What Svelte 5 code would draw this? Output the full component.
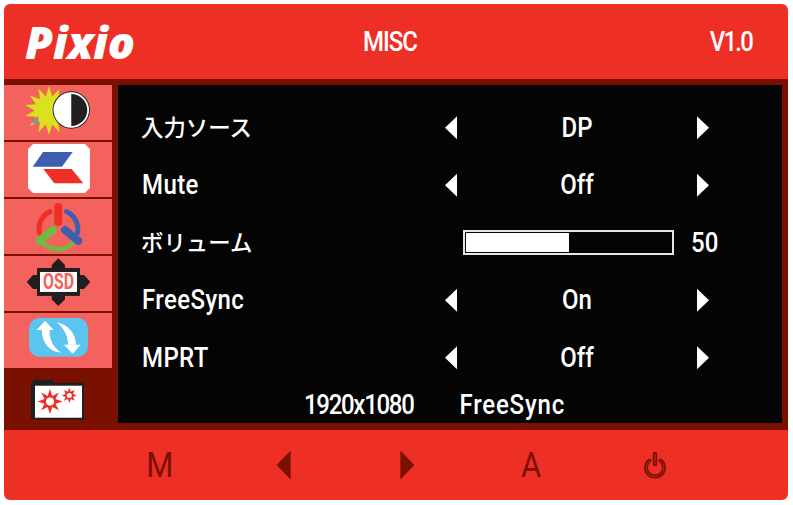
<script>
    let rows = [
        { label: '入力ソース', value: 'DP', cjk: true },
        { label: 'Mute', value: 'Off' },
        { label: 'ボリューム', volume: 50, cjk: true },
        { label: 'FreeSync', value: 'On' },
        { label: 'MPRT', value: 'Off' }
    ];

    // spiky gear / sun outline
    function star(cx, cy, outer, inner, n) {
        let pts = [];
        for (let i = 0; i < n * 2; i++) {
            let r = i % 2 ? inner : outer;
            let a = (Math.PI * i) / n - Math.PI / 2;
            pts.push((cx + r * Math.cos(a)).toFixed(1) + ',' + (cy + r * Math.sin(a)).toFixed(1));
        }
        return pts.join(' ');
    }
</script>

<div class="osd">
    <header class="top">
        <span class="logo">Pixio</span>
        <span class="title tall">MISC</span>
        <span class="version tall">V1.0</span>
    </header>

    <div class="middle">
        <nav class="tabs">
            <div class="tab">
                <svg viewBox="4 85 108 55">
                    <polygon points={star(49, 110.5, 24.5, 14.5, 14)} fill="#dbe01f" />
                    <polygon points="30,123 38,116 39,124" fill="#8f8f8f" />
                    <circle cx="71.3" cy="110" r="18.7" fill="#231f20" />
                    <circle cx="71.3" cy="110" r="17.8" fill="#fff" />
                    <path d="M71.3 94 A16 16 0 0 1 71.3 126 Z" fill="#231f20" />
                </svg>
            </div>
            <div class="tab">
                <svg viewBox="4 142 108 55">
                    <polygon points="33,144 85,144 90,149 90,188 85,193 33,193 28,188 28,149" fill="#fff" />
                    <polygon points="43,152 72.7,152 62,166.7 32.7,166.7" fill="#3e5fb0" />
                    <polygon points="43.3,169 71.7,169 83.3,183.3 54.3,183.3" fill="#ee2f25" />
                </svg>
            </div>
            <div class="tab">
                <svg viewBox="4 199 108 55" fill="none" stroke-linecap="round">
                    <path d="M39.4 233 A19.5 19.5 0 0 1 50 211.5" stroke="#ee2f25" stroke-width="5" />
                    <path d="M66.5 211.5 A19.5 19.5 0 0 1 77.5 233" stroke="#3e5fb0" stroke-width="5" />
                    <path d="M43 243 A21 21 0 0 0 72.5 243.5" stroke="#6fba44" stroke-width="4.5" />
                    <path d="M58.3 207 V222" stroke="#ee2f25" stroke-width="8" />
                    <path d="M52.7 230 L39.5 241" stroke="#6fba44" stroke-width="8" />
                    <path d="M65 230 L78.3 241" stroke="#3e5fb0" stroke-width="8" />
                </svg>
            </div>
            <div class="tab">
                <svg viewBox="4 256 108 55">
                    <g fill="#231f20">
                        <polygon points="58.3,258.3 65,265 65,270 51.7,270 51.7,265" />
                        <polygon points="58.3,306 65,299.5 65,294 51.7,294 51.7,299.5" />
                        <polygon points="26.7,282 33,275 39,275 39,289 33,289" />
                        <polygon points="90.5,282 84,275 78,275 78,289 84,289" />
                        <rect x="37" y="268" width="43" height="28" />
                    </g>
                    <rect x="40" y="272" width="37" height="20" fill="#fff" />
                    <text class="osd-text" x="58.5" y="289" text-anchor="middle" textLength="31" lengthAdjust="spacingAndGlyphs">OSD</text>
                </svg>
            </div>
            <div class="tab">
                <svg viewBox="4 314 108 55">
                    <rect x="29" y="319" width="59" height="38.7" rx="10" fill="#5cc4f0" />
                    <g fill="#fff">
                        <polygon points="45,321.7 53.5,331 36.7,331" />
                        <path d="M41.7 331 C42 345 50 353 61 353.5 C54 349 49.5 342 49.5 331 Z" />
                        <polygon points="72.7,355 80.5,345.7 64,345.7" />
                        <path d="M56.7 323.5 C66 325 76 333 76 345.7 L68 345.7 C68 336 63 328 56.7 323.5 Z" />
                    </g>
                </svg>
            </div>
            <div class="tab active">
                <svg viewBox="4 369 108 55">
                    <path d="M31 379 H33 V376.5 L34 376 H53 L54 379 H84 V416 H31 Z" fill="#231f20" />
                    <rect x="35" y="382" width="47" height="32" fill="#fff" />
                    <polygon points={star(50, 397.7, 12.5, 6, 8)} fill="#ee2f25" />
                    <circle cx="50" cy="397.7" r="4" fill="#fff" />
                    <polygon points={star(69.3, 391.7, 7.5, 4, 8)} fill="#ee2f25" />
                    <circle cx="69.3" cy="391.7" r="2.5" fill="#fff" />
                </svg>
            </div>
        </nav>

        <main class="panel">
            <div class="rows">
                {#each rows as row}
                    <div class="row">
                        <span class="label" class:tall={!row.cjk} class:cjk={row.cjk}>{row.label}</span>
                        {#if row.volume !== undefined}
                            <div class="volume">
                                <div class="bar">
                                    <div class="fill" style="width: {row.volume}%"></div>
                                </div>
                                <span class="num tall">{row.volume}</span>
                            </div>
                        {:else}
                            <span class="arrow left"></span>
                            <span class="value tall">{row.value}</span>
                            <span class="arrow right"></span>
                        {/if}
                    </div>
                {/each}
            </div>
            <div class="status">
                <span class="res tall">1920x1080</span>
                <span class="sync tall">FreeSync</span>
            </div>
        </main>
    </div>

    <footer class="keys">
        <span class="key"><span class="letter">M</span></span>
        <span class="key"><span class="key-arrow left"></span></span>
        <span class="key"><span class="key-arrow right"></span></span>
        <span class="key"><span class="letter">A</span></span>
        <span class="key">
            <svg class="power" viewBox="0 0 24 28" fill="none" stroke-linecap="round">
                <path d="M6.5 9.5 A9 9 0 1 0 17.5 9.5" stroke="#7a1000" stroke-width="4" />
                <path d="M12 3 V13" stroke="#7a1000" stroke-width="4.5" />
                <path d="M6.5 9.5 A9 9 0 1 0 17.5 9.5" stroke="#c22a1c" stroke-width="0.9" />
                <path d="M12 3 V13" stroke="#c22a1c" stroke-width="1" />
            </svg>
        </span>
    </footer>
</div>

<style>
    :global(body) {
        background: #fff;
    }

    .osd {
        box-sizing: border-box;
        width: 793px;
        height: 505px;
        padding: 4px 5px 5px 4px;
        display: flex;
        flex-direction: column;
        font-family: Roboto, "Noto Sans CJK JP", sans-serif;
        font-size: 24px;
        font-weight: 500;
        color: #fff;
    }
    /* the OSD font is narrower and taller than Roboto */
    .tall {
        display: inline-block;
        transform: translateY(0.5px) scaleY(1.12);
    }

    /* ── Header ── */
    .top {
        height: 75px;
        flex-shrink: 0;
        display: flex;
        align-items: center;
        background: #ee2f25;
        border-radius: 6px 6px 0 0;
    }
    .logo {
        width: 359px;
        padding-left: 21px;
        box-sizing: border-box;
        font-family: "Open Sans", sans-serif;
        font-weight: 800;
        font-style: italic;
        font-size: 45px;
        line-height: 1;
    }
    .title {
        letter-spacing: -1px;
    }
    .version {
        margin-left: auto;
        margin-right: 36px;
        letter-spacing: -1.8px;
    }

    /* ── Middle ── */
    .middle {
        flex: 1;
        display: flex;
        background: #7a1000;
        padding: 6px 6px 7px 0;
    }
    .tabs {
        width: 108px;
        margin-right: 6px;
        margin-bottom: -7px;
        display: flex;
        flex-direction: column;
        gap: 2px;
    }
    .tab {
        flex: 1;
        min-height: 0;
        background: #f3625c;
    }
    .tab.active {
        background: transparent;
        flex: 1.1;
    }
    .tab svg {
        display: block;
        width: 100%;
        height: 100%;
        overflow: visible;
    }
    .osd-text {
        font-family: Roboto, sans-serif;
        font-weight: 700;
        font-size: 22px;
        fill: #f3625c;
    }

    /* ── Panel ── */
    .panel {
        flex: 1;
        background: #040404;
        padding-top: 14px;
        display: flex;
        flex-direction: column;
    }
    .rows {
        display: grid;
        grid-auto-rows: 57.5px;
    }
    .row {
        display: grid;
        grid-template-columns: 303px 12px 240px 12px;
        align-items: center;
        padding-left: 24px;
    }
    .label {
        letter-spacing: 0.4px;
    }
    .cjk {
        font-size: 22.4px;
        font-weight: 500;
        letter-spacing: 0;
        margin-left: -1px;
        margin-top: -4px;
    }
    .value {
        text-align: center;
    }
    .arrow {
        height: 23px;
        background: #fff;
    }
    .arrow.left {
        clip-path: polygon(100% 0, 100% 100%, 0 50%);
    }
    .arrow.right {
        clip-path: polygon(0 0, 0 100%, 100% 50%);
    }
    .volume {
        grid-column: 2 / 5;
        margin-left: 18px;
        display: flex;
        align-items: center;
        gap: 17px;
    }
    .bar {
        box-sizing: border-box;
        width: 211px;
        height: 25px;
        flex-shrink: 0;
        border: 2px solid #e6e6e6;
        padding: 1px;
    }
    .fill {
        height: 100%;
        background: #fff;
    }
    .status {
        flex: 1;
        display: flex;
        align-items: center;
        padding-left: 186px;
        gap: 46px;
    }
    .res {
        letter-spacing: -1.3px;
    }
    .sync {
        letter-spacing: 0.8px;
    }

    /* ── Footer keys ── */
    .keys {
        height: 70px;
        flex-shrink: 0;
        display: grid;
        grid-template-columns: repeat(5, 123.75px);
        padding-left: 94px;
        background: #ee2f25;
        border-radius: 0 0 6px 6px;
        color: #7a1000;
        font-size: 31px;
        font-weight: 400;
    }
    .key {
        display: flex;
        align-items: center;
        justify-content: center;
    }
    .letter {
        display: inline-block;
        transform: scaleY(1.12);
    }
    .key-arrow {
        width: 14px;
        height: 29px;
        background: #7a1000;
    }
    .key-arrow.left {
        clip-path: polygon(100% 0, 100% 100%, 0 50%);
    }
    .key-arrow.right {
        clip-path: polygon(0 0, 0 100%, 100% 50%);
    }
    .power {
        width: 24px;
        height: 28px;
    }
</style>
